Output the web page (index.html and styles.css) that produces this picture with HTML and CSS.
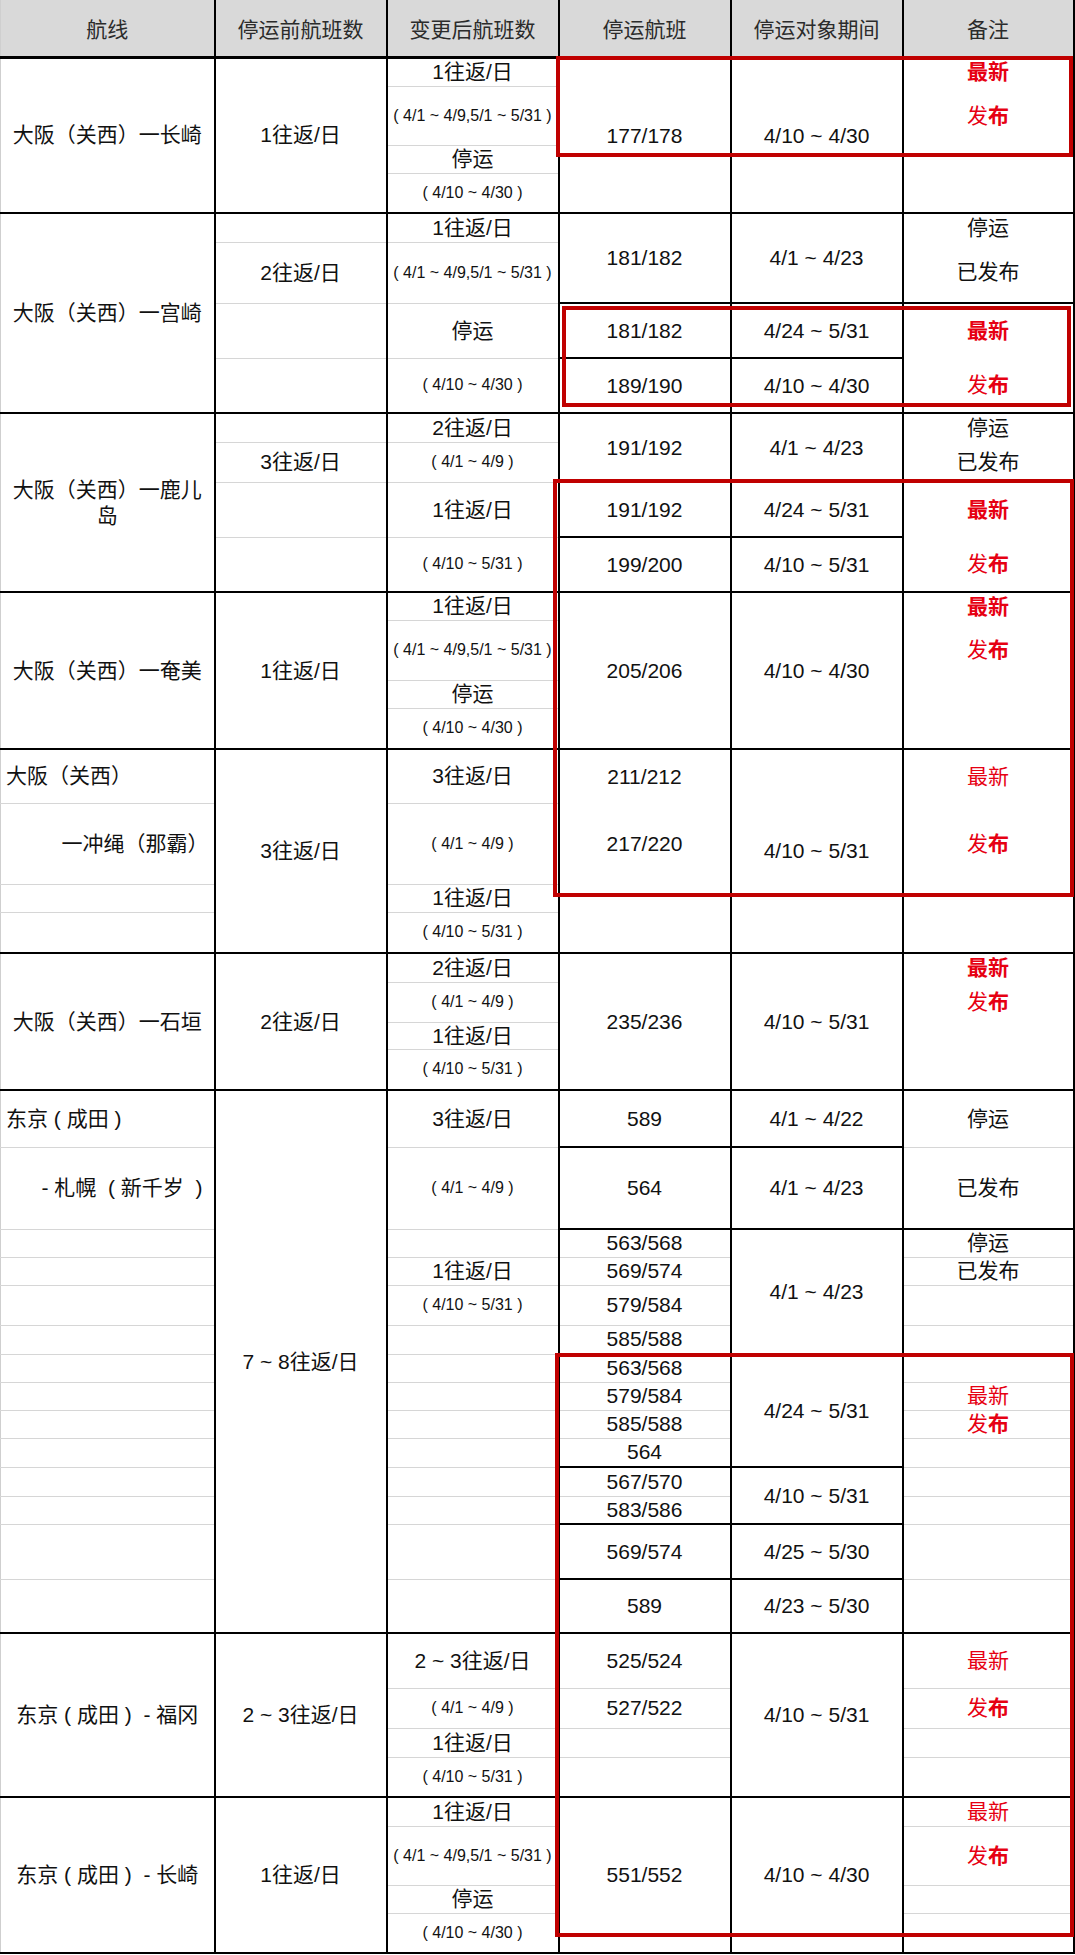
FILE: index.html
```html
<!DOCTYPE html>
<html lang="zh-CN">
<head>
<meta charset="utf-8">
<title>航班停运一览</title>
<link rel="stylesheet" href="styles.css">
</head>
<body>
<div class="wrap">
<table class="sheet">
<colgroup><col class="w1"><col class="w"><col class="w"><col class="w"><col class="w"><col class="w6"></colgroup>
<thead>
<tr class="hh"><th class="c1">航线</th><th>停运前航班数</th><th>变更后航班数</th><th>停运航班</th><th>停运对象期间</th><th>备注</th></tr>
</thead>
<tbody>
<!-- 大阪-长崎 -->
<tr class="h29">
<td class="c1 b" rowspan="4">大阪（关西）一长崎</td>
<td class="b" rowspan="4">1往返/日</td>
<td>1往返/日</td>
<td class="n"></td>
<td class="n"></td>
<td class="n"><span class="rd bd">最新</span></td>
</tr>
<tr class="h59">
<td class="s">( 4/1 ~ 4/9,5/1 ~ 5/31 )</td>
<td class="n bot">177/178</td>
<td class="n bot">4/10 ~ 4/30</td>
<td class="n"><span class="rd">发<b>布</b></span></td>
</tr>
<tr class="h28">
<td>停运</td>
<td class="n"></td><td class="n"></td><td class="n"></td>
</tr>
<tr class="h40">
<td class="s b">( 4/10 ~ 4/30 )</td>
<td class="b"></td><td class="b"></td><td class="b"></td>
</tr>
<!-- 大阪-宫崎 -->
<tr class="h29">
<td class="c1 b" rowspan="4">大阪（关西）一宫崎</td>
<td></td>
<td>1往返/日</td>
<td class="b" rowspan="2">181/182</td>
<td class="b" rowspan="2">4/1 ~ 4/23</td>
<td class="n">停运</td>
</tr>
<tr class="h61">
<td>2往返/日</td>
<td class="s">( 4/1 ~ 4/9,5/1 ~ 5/31 )</td>
<td class="b">已发布</td>
</tr>
<tr class="h55">
<td></td>
<td>停运</td>
<td class="b">181/182</td>
<td class="b">4/24 ~ 5/31</td>
<td class="n"><span class="rd bd">最新</span></td>
</tr>
<tr class="h55">
<td class="b"></td>
<td class="s b">( 4/10 ~ 4/30 )</td>
<td class="b">189/190</td>
<td class="b">4/10 ~ 4/30</td>
<td class="b"><span class="rd">发<b>布</b></span></td>
</tr>
<!-- 大阪-鹿儿岛 -->
<tr class="h29">
<td class="c1 b l2" rowspan="4">大阪（关西）一鹿儿<br>岛</td>
<td></td>
<td>2往返/日</td>
<td class="b" rowspan="2">191/192</td>
<td class="b" rowspan="2">4/1 ~ 4/23</td>
<td class="n">停运</td>
</tr>
<tr class="h40">
<td>3往返/日</td>
<td class="s">( 4/1 ~ 4/9 )</td>
<td class="b">已发布</td>
</tr>
<tr class="h55">
<td></td>
<td>1往返/日</td>
<td class="b">191/192</td>
<td class="b">4/24 ~ 5/31</td>
<td class="n"><span class="rd bd">最新</span></td>
</tr>
<tr class="h55">
<td class="b"></td>
<td class="s b">( 4/10 ~ 5/31 )</td>
<td class="b">199/200</td>
<td class="b">4/10 ~ 5/31</td>
<td class="b"><span class="rd">发<b>布</b></span></td>
</tr>
<!-- 大阪-奄美 -->
<tr class="h28">
<td class="c1 b" rowspan="4">大阪（关西）一奄美</td>
<td class="b" rowspan="4">1往返/日</td>
<td>1往返/日</td>
<td class="b" rowspan="4">205/206</td>
<td class="b" rowspan="4">4/10 ~ 4/30</td>
<td class="n"><span class="rd bd">最新</span></td>
</tr>
<tr class="h60">
<td class="s">( 4/1 ~ 4/9,5/1 ~ 5/31 )</td>
<td class="n"><span class="rd">发<b>布</b></span></td>
</tr>
<tr class="h28">
<td>停运</td>
<td class="n"></td>
</tr>
<tr class="h41">
<td class="s b">( 4/10 ~ 4/30 )</td>
<td class="b"></td>
</tr>
<!-- 大阪-冲绳 -->
<tr class="h54">
<td class="c1 l">大阪（关西）</td>
<td class="b" rowspan="4">3往返/日</td>
<td>3往返/日</td>
<td class="n">211/212</td>
<td class="b" rowspan="4">4/10 ~ 5/31</td>
<td class="n"><span class="rd">最新</span></td>
</tr>
<tr class="h81">
<td class="c1 r">一冲绳（那霸）</td>
<td class="s">( 4/1 ~ 4/9 )</td>
<td class="n">217/220</td>
<td class="n"><span class="rd">发<b>布</b></span></td>
</tr>
<tr class="h28">
<td class="c1"></td>
<td>1往返/日</td>
<td class="n"></td>
<td class="n"></td>
</tr>
<tr class="h41">
<td class="c1 b"></td>
<td class="s b">( 4/10 ~ 5/31 )</td>
<td class="b"></td>
<td class="b"></td>
</tr>
<!-- 大阪-石垣 -->
<tr class="h29">
<td class="c1 b" rowspan="4">大阪（关西）一石垣</td>
<td class="b" rowspan="4">2往返/日</td>
<td>2往返/日</td>
<td class="b" rowspan="4">235/236</td>
<td class="b" rowspan="4">4/10 ~ 5/31</td>
<td class="n"><span class="rd bd">最新</span></td>
</tr>
<tr class="h40">
<td class="s">( 4/1 ~ 4/9 )</td>
<td class="n"><span class="rd">发<b>布</b></span></td>
</tr>
<tr class="h27">
<td>1往返/日</td>
<td class="n"></td>
</tr>
<tr class="h41">
<td class="s b">( 4/10 ~ 5/31 )</td>
<td class="b"></td>
</tr>
<!-- 东京-札幌 -->
<tr class="h57">
<td class="c1 l">东京 ( 成田 )</td>
<td class="b" rowspan="14">7 ~ 8往返/日</td>
<td>3往返/日</td>
<td class="b">589</td>
<td class="b">4/1 ~ 4/22</td>
<td>停运</td>
</tr>
<tr class="h82">
<td class="c1 r r2">- 札幌&nbsp; ( 新千岁&nbsp; )</td>
<td class="s">( 4/1 ~ 4/9 )</td>
<td class="b">564</td>
<td class="b">4/1 ~ 4/23</td>
<td class="b">已发布</td>
</tr>
<tr class="h28">
<td class="c1"></td>
<td></td>
<td>563/568</td>
<td class="b" rowspan="4">4/1 ~ 4/23</td>
<td>停运</td>
</tr>
<tr class="h28">
<td class="c1"></td>
<td>1往返/日</td>
<td>569/574</td>
<td>已发布</td>
</tr>
<tr class="h40">
<td class="c1"></td>
<td class="s">( 4/10 ~ 5/31 )</td>
<td>579/584</td>
<td></td>
</tr>
<tr class="h29">
<td class="c1"></td>
<td></td>
<td class="b">585/588</td>
<td class="b"></td>
</tr>
<tr class="h28">
<td class="c1"></td>
<td></td>
<td>563/568</td>
<td class="b" rowspan="4">4/24 ~ 5/31</td>
<td></td>
</tr>
<tr class="h28">
<td class="c1"></td>
<td></td>
<td>579/584</td>
<td><span class="rd">最新</span></td>
</tr>
<tr class="h28">
<td class="c1"></td>
<td></td>
<td>585/588</td>
<td><span class="rd">发<b>布</b></span></td>
</tr>
<tr class="h29">
<td class="c1"></td>
<td></td>
<td class="b">564</td>
<td></td>
</tr>
<tr class="h29">
<td class="c1"></td>
<td></td>
<td>567/570</td>
<td class="b" rowspan="2">4/10 ~ 5/31</td>
<td></td>
</tr>
<tr class="h28">
<td class="c1"></td>
<td></td>
<td class="b">583/586</td>
<td></td>
</tr>
<tr class="h55">
<td class="c1"></td>
<td></td>
<td class="b">569/574</td>
<td class="b">4/25 ~ 5/30</td>
<td></td>
</tr>
<tr class="h54">
<td class="c1 b"></td>
<td class="b"></td>
<td class="b">589</td>
<td class="b">4/23 ~ 5/30</td>
<td class="b"></td>
</tr>
<!-- 东京-福冈 -->
<tr class="h55">
<td class="c1 b" rowspan="4">东京 ( 成田 ) &nbsp;- 福冈</td>
<td class="b" rowspan="4">2 ~ 3往返/日</td>
<td>2 ~ 3往返/日</td>
<td>525/524</td>
<td class="b" rowspan="4">4/10 ~ 5/31</td>
<td><span class="rd">最新</span></td>
</tr>
<tr class="h40">
<td class="s">( 4/1 ~ 4/9 )</td>
<td>527/522</td>
<td><span class="rd">发<b>布</b></span></td>
</tr>
<tr class="h29">
<td>1往返/日</td>
<td></td>
<td></td>
</tr>
<tr class="h40">
<td class="s b">( 4/10 ~ 5/31 )</td>
<td class="b"></td>
<td class="b"></td>
</tr>
<!-- 东京-长崎 -->
<tr class="h29">
<td class="c1 b" rowspan="4">东京 ( 成田 ) &nbsp;- 长崎</td>
<td class="b" rowspan="4">1往返/日</td>
<td>1往返/日</td>
<td class="b" rowspan="4">551/552</td>
<td class="b" rowspan="4">4/10 ~ 4/30</td>
<td><span class="rd">最新</span></td>
</tr>
<tr class="h59">
<td class="s">( 4/1 ~ 4/9,5/1 ~ 5/31 )</td>
<td><span class="rd">发<b>布</b></span></td>
</tr>
<tr class="h28">
<td>停运</td>
<td></td>
</tr>
<tr class="h40">
<td class="s b">( 4/10 ~ 4/30 )</td>
<td class="b"></td>
</tr>
</tbody>
</table>
<div class="box box1"></div>
<div class="box box2"></div>
<div class="box box3"></div>
<div class="box box4"></div>
</div>
</body>
</html>
```
FILE: styles.css
```css
* { box-sizing: border-box; }
html, body { margin: 0; padding: 0; background: #fff; }
body {
  font-family: "Liberation Sans", "Noto Sans CJK SC", sans-serif;
  color: #111;
}
.wrap { position: relative; width: 1075px; height: 1955px; }
.sheet { border-collapse: collapse; table-layout: fixed; width: 1073px; }
.w1 { width: 214px; }
.w { width: 172px; }
.w6 { width: 171px; }
.sheet th, .sheet td {
  padding: 0;
  text-align: center;
  vertical-align: middle;
  font-size: 21px;
  line-height: 24px;
  font-weight: 400;
  white-space: nowrap;
  border-right: 2px solid #000;
  border-bottom: 1px solid #d6d6d6;
}
.sheet th {
  background: #d9d9d9;
  color: #2b2b2b;
  font-family: "Noto Sans CJK SC", sans-serif;
  border-bottom: 3px solid #000;
}
.sheet .c1 { border-left: 1px solid #cfcfcf; }
.sheet td.b { border-bottom: 2px solid #000; }
.sheet td.n { border-bottom: none; }
.sheet td.s { font-size: 16px; }
.sheet td.l { text-align: left; padding-left: 5px; }
.sheet td.r { text-align: right; padding-right: 5px; }
.sheet td.r2 { padding-right: 11px; }
.sheet td.l2 { line-height: 26px; }
.sheet td.bot { vertical-align: bottom; line-height: 18px; }
.rd { color: #e60012; }
.rd b { font-weight: 700; }
.rd.bd { font-weight: 700; }
.hh { height: 57px; }
.h27 { height: 27px; }
.h28 { height: 28px; }
.h29 { height: 29px; }
.h40 { height: 40px; }
.h41 { height: 41px; }
.h54 { height: 54px; }
.h55 { height: 55px; }
.h57 { height: 57px; }
.h59 { height: 59px; }
.h60 { height: 60px; }
.h61 { height: 61px; }
.h81 { height: 81px; }
.h82 { height: 82px; }
.box { position: absolute; border: 4px solid #c00000; pointer-events: none; }
.box1 { left: 556px; top: 56px; width: 517px; height: 101px; }
.box2 { left: 562px; top: 306px; width: 509px; height: 101px; }
.box3 { left: 553px; top: 479px; width: 521px; height: 418px; }
.box4 { left: 555px; top: 1353px; width: 519px; height: 584px; }
```
